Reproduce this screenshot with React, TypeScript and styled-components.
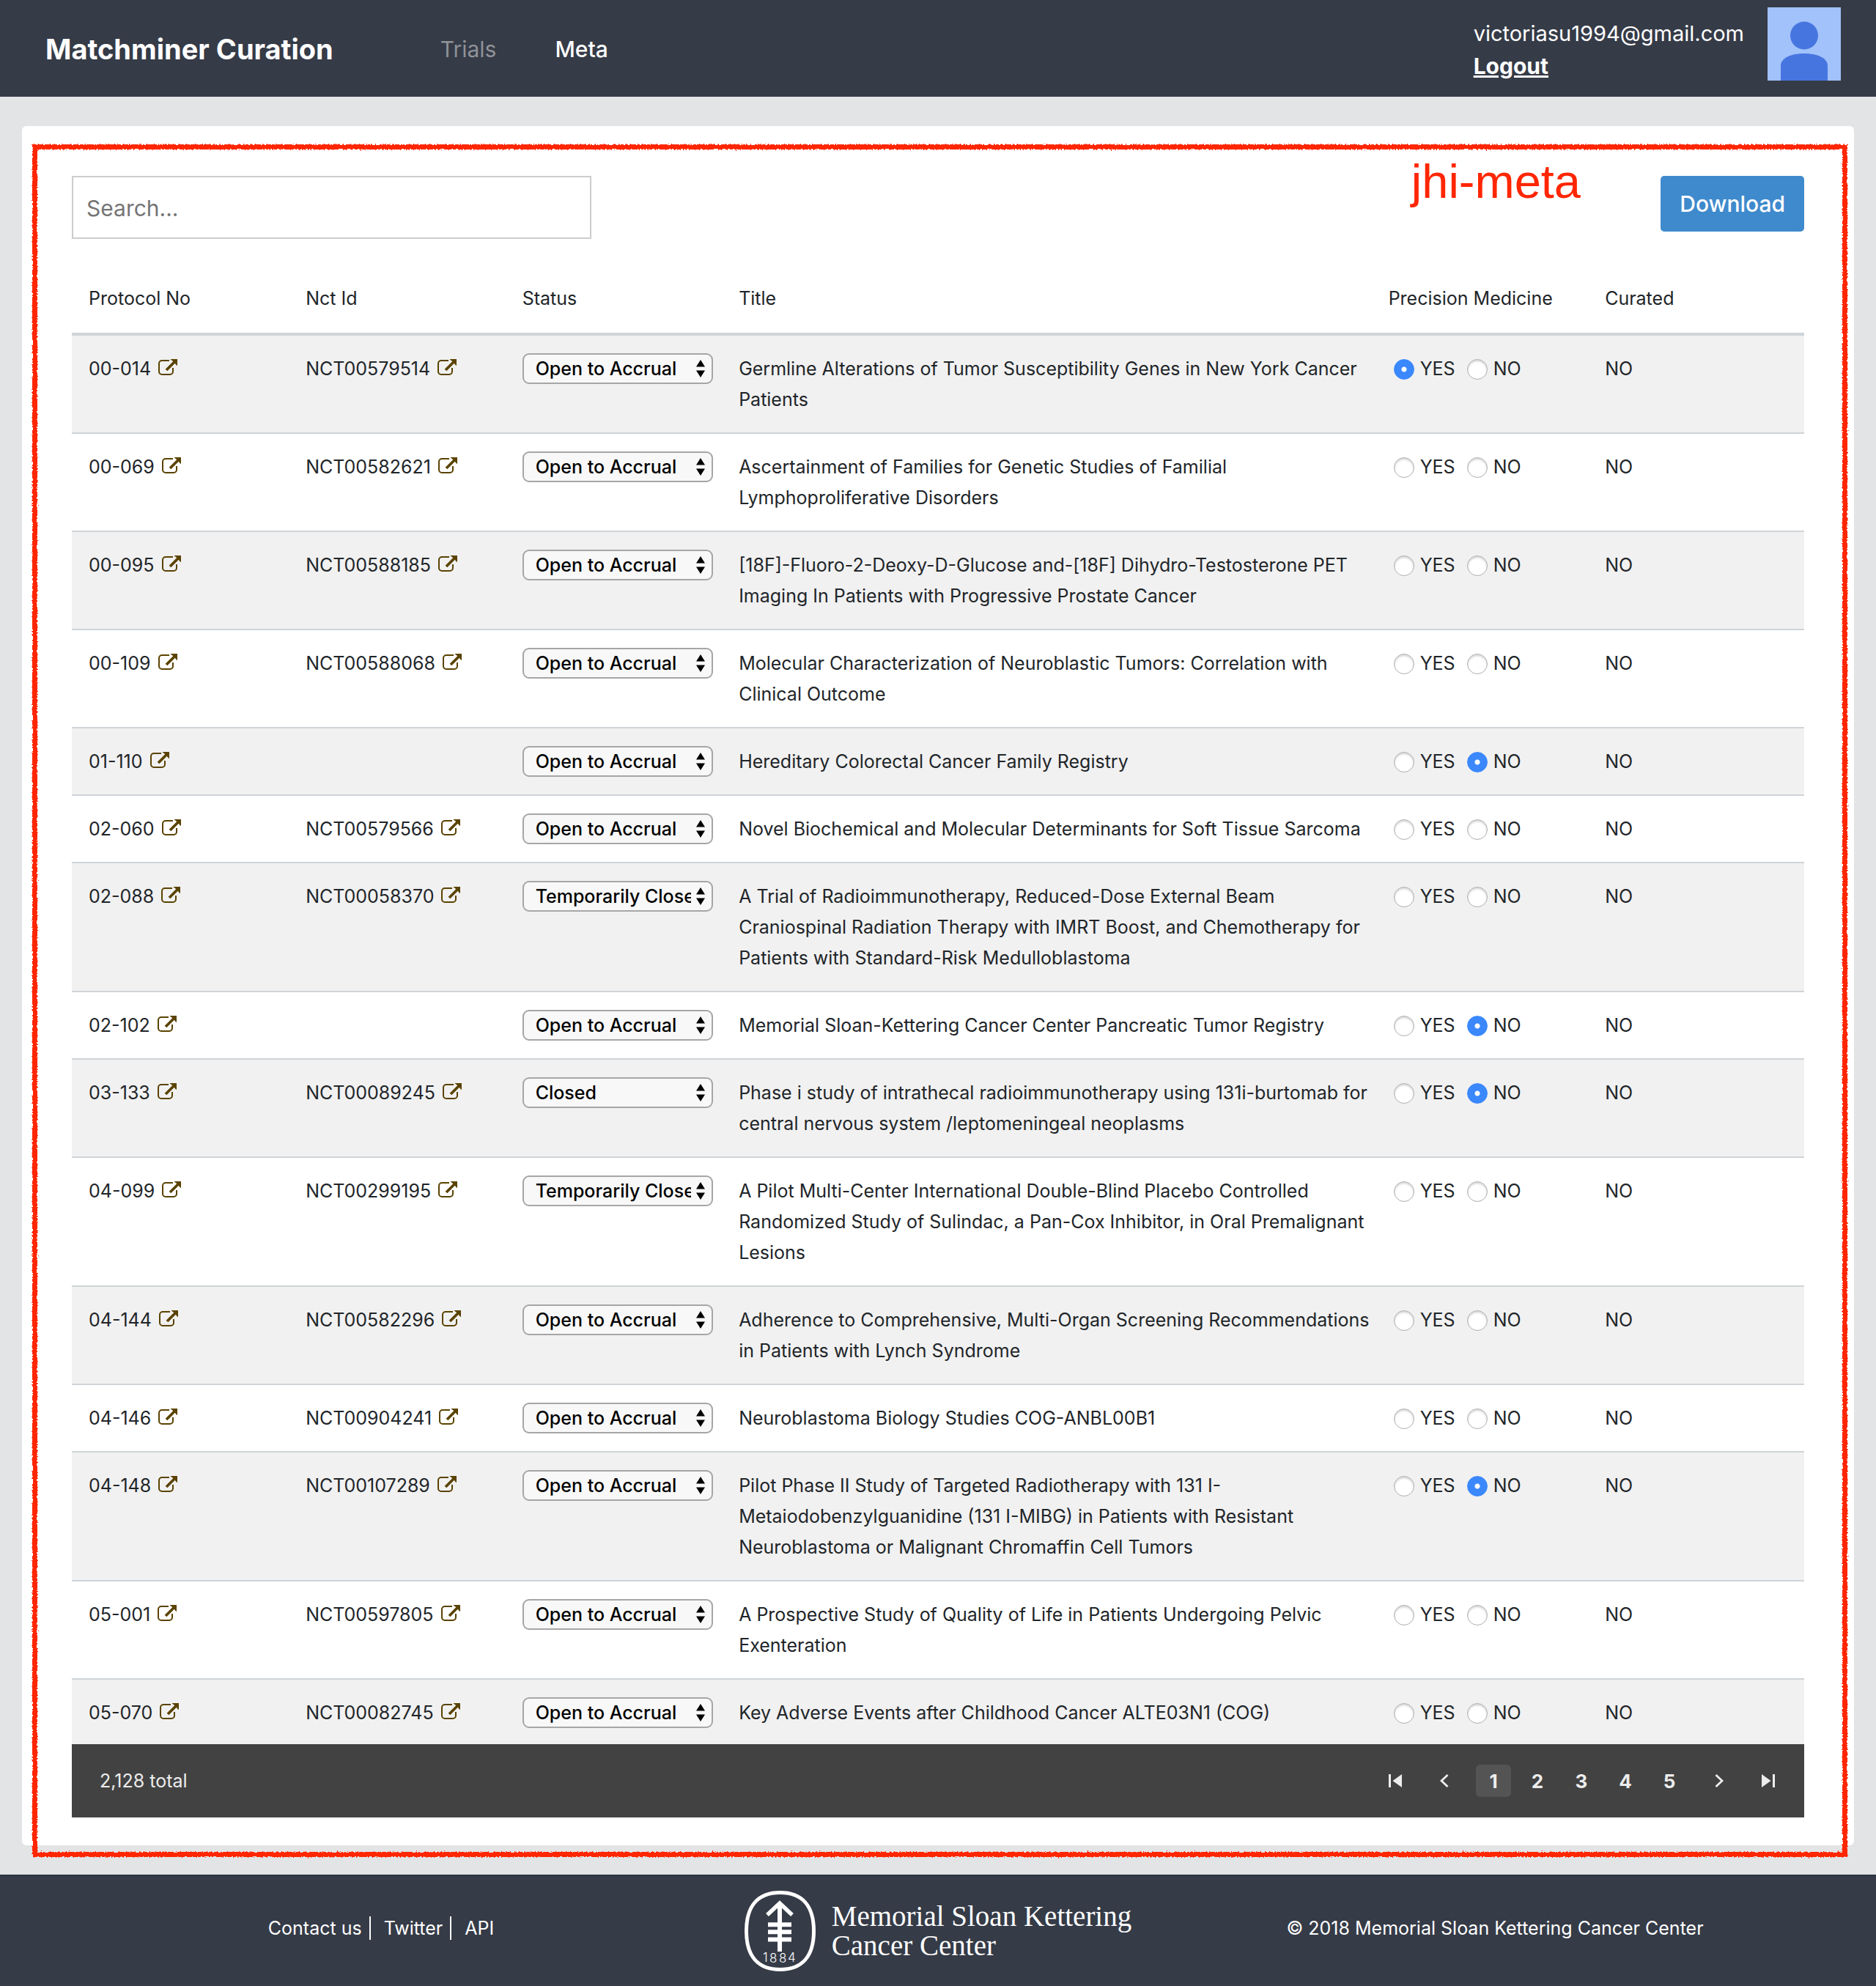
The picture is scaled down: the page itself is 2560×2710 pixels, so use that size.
import React from "react";
import styled, { createGlobalStyle } from "styled-components";

const colors = {
  slate: "#353b47",
  page: "#e3e4e6",
  text: "#212529",
  line: "#cfd4d8",
  stripe: "#f1f1f1",
  blue: "#3f8acd",
  mark: "#ff2600",
  icon: "#5a4300",
};

const GlobalStyle = createGlobalStyle`
  *, *::before, *::after { box-sizing: border-box; }
  body {
    margin: 0;
    background: ${colors.page};
    color: ${colors.text};
    font-family: Inter, "Liberation Sans", sans-serif;
    font-size: 25px;
    font-weight: 400;
    line-height: 42px;
  }
  button, input, select { font-family: inherit; margin: 0; }
`;

/* ---------- header ---------- */

const Header = styled.header`
  display: flex;
  align-items: center;
  min-height: 132px;
  padding: 2px 48px 0 62px;
  background: ${colors.slate};
  color: #fff;
`;

const Brand = styled.a`
  color: inherit;
  font-size: 38px;
  font-weight: 700;
  text-decoration: none;
`;

const Nav = styled.nav`
  display: flex;
  gap: 80px;
  margin-left: 146px;
`;

const NavLink = styled.a<{ $active?: boolean }>`
  color: ${(p) => (p.$active ? "#fff" : "#8f9297")};
  font-size: 30px;
  font-weight: ${(p) => (p.$active ? 500 : 400)};
  text-decoration: none;
`;

const User = styled.div`
  display: flex;
  align-items: center;
  gap: 32px;
  margin-left: auto;
  padding-top: 2px;
`;

const UserText = styled.div`
  display: flex;
  flex-direction: column;
  align-items: flex-start;
  font-size: 29px;
  line-height: 44px;
`;

const Logout = styled.a`
  color: inherit;
  font-size: 30px;
  font-weight: 700;
  text-decoration: underline;
`;

const Avatar = styled.svg`
  display: block;
  width: 100px;
  height: 100px;
  margin-bottom: 16px;
`;

/* ---------- card ---------- */

const Main = styled.main`
  padding: 40px 30px;
`;

const Card = styled.section`
  position: relative;
  padding: 68px 68px 38px;
  border-radius: 6px;
  background: #fff;
`;

const Outline = styled.div`
  position: absolute;
  inset: 25px 9px -16px 14px;
  border: 7px solid ${colors.mark};
  filter: url(#crayon);
  pointer-events: none;
`;

const MarkLabel = styled.div`
  position: absolute;
  top: 44px;
  right: 373px;
  color: ${colors.mark};
  font-family: "Liberation Sans", sans-serif;
  font-size: 65px;
  line-height: 64px;
`;

const Defs = styled.svg`
  position: absolute;
  width: 0;
  height: 0;
`;

const Toolbar = styled.div`
  display: flex;
  align-items: flex-start;
  justify-content: space-between;
  margin-bottom: 36px;
`;

const Search = styled.input`
  width: 30%;
  height: 86px;
  padding: 2px 18px 0;
  border: 2px solid #ccc;
  background: #fff;
  color: ${colors.text};
  font-size: 30px;
  &::placeholder { color: #757575; opacity: 1; }
`;

const Download = styled.button`
  height: 76px;
  padding: 0 26px;
  border: 0;
  border-radius: 5px;
  background: ${colors.blue};
  color: #fff;
  font-size: 30px;
  font-weight: 500;
`;

/* ---------- table ---------- */

const Table = styled.table`
  width: 100%;
  table-layout: fixed;
  border-collapse: separate;
  border-spacing: 0;
`;

const Col = styled.col<{ $share: string }>`
  width: ${(p) => p.$share};
`;

const HeadCell = styled.th`
  padding: 24px 0 26px;
  border-bottom: 4px solid ${colors.line};
  font-weight: 400;
  text-align: left;
  &:first-child { padding-left: 23px; }
`;

const Row = styled.tr`
  &:nth-child(odd) { background: ${colors.stripe}; }
`;

const Cell = styled.td`
  padding: 24px 0;
  border-bottom: 2px solid ${colors.line};
  vertical-align: top;
  &:first-child { padding-left: 23px; }
  ${Row}:last-child & {
    padding-bottom: 22px;
    border-bottom: 0;
  }
`;

const TitleCell = styled(Cell)`
  padding-right: 12px;
`;

const CellLine = styled.div`
  display: flex;
  align-items: center;
  height: 42px;
`;

const IconLink = styled.a`
  display: flex;
  margin: 0 0 4px 10px;
  color: ${colors.icon};
`;

const SelectBox = styled.div`
  display: grid;
  width: 260px;
  max-width: 100%;
  & > * { grid-area: 1 / 1; }
`;

const StatusSelect = styled.select`
  appearance: none;
  width: 100%;
  height: 42px;
  padding: 0 28px 0 16px;
  border: 2px solid #a6a6a6;
  border-radius: 9px;
  background: #f8f8f8;
  color: #000;
  font-size: 25px;
  font-weight: 500;
  text-overflow: clip;
`;

const SelectArrows = styled.svg`
  place-self: center end;
  width: 12px;
  height: 24px;
  margin-right: 11px;
  pointer-events: none;
`;

const RadioGroup = styled.div`
  display: flex;
  gap: 16px;
  height: 42px;
  padding-left: 7px;
`;

const RadioLabel = styled.label`
  display: flex;
  align-items: center;
  gap: 8px;
`;

const Radio = styled.input`
  appearance: none;
  width: 28px;
  height: 28px;
  margin-top: 2px;
  border: 1px solid #b0b0b0;
  border-radius: 50%;
  background: #fff;
  box-shadow: inset 0 2px 3px rgba(0, 0, 0, 0.18);
  &:checked {
    border-color: #3b88fd;
    background: radial-gradient(circle, #fff 3px, #3b88fd 4px);
    box-shadow: none;
  }
`;

const Pager = styled.div`
  display: flex;
  align-items: center;
  justify-content: space-between;
  height: 100px;
  padding: 0 22px 0 38px;
  background: #424242;
  color: #ededed;
`;

const PagerNav = styled.nav`
  display: flex;
  align-items: center;
  gap: 12px;
`;

const PageNumbers = styled.div`
  display: flex;
  gap: 12px;
  padding: 0 4px;
`;

const PagerButton = styled.button<{ $current?: boolean; $icon?: boolean }>`
  display: grid;
  place-items: center;
  width: ${(p) => (p.$icon ? 55 : 48)}px;
  height: 44px;
  padding: 0;
  border: 0;
  border-radius: 6px;
  background: ${(p) => (p.$current ? "#545454" : "transparent")};
  color: inherit;
  font-size: 26px;
  font-weight: 700;
`;

/* ---------- footer ---------- */

const Footer = styled.footer`
  min-height: 152px;
  padding: 20px 0;
  border-top: 2px solid #2d343e;
  background: ${colors.slate};
  color: #fff;
`;

const FooterGrid = styled.div`
  display: grid;
  grid-template-columns: repeat(3, 1fr);
  align-items: center;
  justify-items: center;
  max-width: 2280px;
  margin: 0 auto;
`;

const FooterText = styled.div`
  display: flex;
  padding-bottom: 8px;
`;

const FooterLink = styled.a`
  padding-right: 10px;
  color: inherit;
  line-height: 32px;
  text-decoration: none;
  & + & {
    padding-left: 18px;
    border-left: 2px solid #fff;
  }
  &:last-child { padding-right: 0; }
`;

const Logo = styled.div`
  display: flex;
  align-items: center;
  gap: 22px;
`;

const LogoText = styled.div`
  font-family: "Liberation Serif", serif;
  font-size: 39px;
  line-height: 40px;
`;

/* ---------- icons ---------- */

const ExternalIcon = () => (
  <svg width="26" height="23" viewBox="0 0 26 23" fill="none" stroke="currentColor" aria-hidden="true">
    <path d="M15 2H5a4 4 0 0 0-4 4v11a4 4 0 0 0 4 4h11a4 4 0 0 0 4-4v-5" strokeWidth="2" />
    <path d="M11 15 22 4" strokeWidth="3.800" />
    <path d="M16.500 0H26v9c-1.500-.7-2.200-1.600-3-3l-3.500-3.500c-1.200-.8-2.300-1.500-3-2.500Z" fill="currentColor" stroke="none" />
  </svg>
);

const FirstIcon = () => (
  <svg width="18" height="18" viewBox="0 0 18 18" fill="currentColor" aria-hidden="true">
    <path d="M0 0h3v18H0zM18 0v18L5.500 9z" />
  </svg>
);

const PrevIcon = () => (
  <svg width="12" height="18" viewBox="0 0 12 18" fill="none" stroke="currentColor" strokeWidth="2.800" aria-hidden="true">
    <path d="M10.500 1 2 9l8.500 8" />
  </svg>
);

const NextIcon = () => (
  <svg width="12" height="18" viewBox="0 0 12 18" fill="none" stroke="currentColor" strokeWidth="2.800" aria-hidden="true">
    <path d="M1.500 1 10 9l-8.500 8" />
  </svg>
);

const LastIcon = () => (
  <svg width="18" height="18" viewBox="0 0 18 18" fill="currentColor" aria-hidden="true">
    <path d="M15 0h3v18h-3zM0 0v18l12.500-9z" />
  </svg>
);

const LogoMark = () => (
  <svg width="97" height="110" viewBox="0 0 97 110" fill="none" stroke="#fff" aria-hidden="true">
    <path
      d="M48.500 2.500C78 2.500 94.500 20 94.500 55S78 107.500 48.500 107.500 2.500 90 2.500 55 19 2.500 48.500 2.500Z"
      strokeWidth="5"
    />
    <path d="M31 33 48 17l17 16" strokeWidth="5.600" />
    <path d="M48 17v66" strokeWidth="6" />
    <path d="M32 46.300h32M32 56.300h32M32 66.500h32" strokeWidth="6" />
    <text x="25 34 47 59" y="97 98 98 96.500" fill="#fff" stroke="none" fontFamily="Inter, sans-serif" fontSize="17" fontWeight="300">
      1884
    </text>
  </svg>
);

/* ---------- data ---------- */

type Trial = {
  no: string;
  nct?: string;
  status: string;
  title: string;
  precision?: "YES" | "NO";
};

const OPEN = "Open to Accrual";
const TEMP = "Temporarily Closed to Accrual";
const CLOSED = "Closed";
const STATUSES = [OPEN, TEMP, CLOSED];

const trials: Trial[] = [
  { no: "00-014", nct: "NCT00579514", status: OPEN, title: "Germline Alterations of Tumor Susceptibility Genes in New York Cancer Patients", precision: "YES" },
  { no: "00-069", nct: "NCT00582621", status: OPEN, title: "Ascertainment of Families for Genetic Studies of Familial Lymphoproliferative Disorders" },
  { no: "00-095", nct: "NCT00588185", status: OPEN, title: "[18F]-Fluoro-2-Deoxy-D-Glucose and-[18F] Dihydro-Testosterone PET Imaging In Patients with Progressive Prostate Cancer" },
  { no: "00-109", nct: "NCT00588068", status: OPEN, title: "Molecular Characterization of Neuroblastic Tumors: Correlation with Clinical Outcome" },
  { no: "01-110", status: OPEN, title: "Hereditary Colorectal Cancer Family Registry", precision: "NO" },
  { no: "02-060", nct: "NCT00579566", status: OPEN, title: "Novel Biochemical and Molecular Determinants for Soft Tissue Sarcoma" },
  { no: "02-088", nct: "NCT00058370", status: TEMP, title: "A Trial of Radioimmunotherapy, Reduced-Dose External Beam Craniospinal Radiation Therapy with IMRT Boost, and Chemotherapy for Patients with Standard-Risk Medulloblastoma" },
  { no: "02-102", status: OPEN, title: "Memorial Sloan-Kettering Cancer Center Pancreatic Tumor Registry", precision: "NO" },
  { no: "03-133", nct: "NCT00089245", status: CLOSED, title: "Phase i study of intrathecal radioimmunotherapy using 131i-burtomab for central nervous system /leptomeningeal neoplasms", precision: "NO" },
  { no: "04-099", nct: "NCT00299195", status: TEMP, title: "A Pilot Multi-Center International Double-Blind Placebo Controlled Randomized Study of Sulindac, a Pan-Cox Inhibitor, in Oral Premalignant Lesions" },
  { no: "04-144", nct: "NCT00582296", status: OPEN, title: "Adherence to Comprehensive, Multi-Organ Screening Recommendations in Patients with Lynch Syndrome" },
  { no: "04-146", nct: "NCT00904241", status: OPEN, title: "Neuroblastoma Biology Studies COG-ANBL00B1" },
  { no: "04-148", nct: "NCT00107289", status: OPEN, title: "Pilot Phase II Study of Targeted Radiotherapy with 131 I-Metaiodobenzylguanidine (131 I-MIBG) in Patients with Resistant Neuroblastoma or Malignant Chromaffin Cell Tumors", precision: "NO" },
  { no: "05-001", nct: "NCT00597805", status: OPEN, title: "A Prospective Study of Quality of Life in Patients Undergoing Pelvic Exenteration" },
  { no: "05-070", nct: "NCT00082745", status: OPEN, title: "Key Adverse Events after Childhood Cancer ALTE03N1 (COG)" },
];

const HEADINGS = ["Protocol No", "Nct Id", "Status", "Title", "Precision Medicine", "Curated"];
const SHARES = ["13.5%", "12.5%", "12.5%", "37.5%", "12.5%", "11.5%"];

const TrialRow = ({ trial }: { trial: Trial }) => (
  <Row>
    <Cell>
      <CellLine>
        {trial.no}
        <IconLink href="#" aria-label={`Open protocol ${trial.no}`}>
          <ExternalIcon />
        </IconLink>
      </CellLine>
    </Cell>
    <Cell>
      {trial.nct && (
        <CellLine>
          {trial.nct}
          <IconLink href="#" aria-label={`Open ${trial.nct}`}>
            <ExternalIcon />
          </IconLink>
        </CellLine>
      )}
    </Cell>
    <Cell>
      <SelectBox>
        <StatusSelect defaultValue={trial.status} aria-label={`Status of ${trial.no}`}>
          {STATUSES.map((s) => (
            <option key={s}>{s}</option>
          ))}
        </StatusSelect>
        <SelectArrows viewBox="0 0 12 24" aria-hidden="true">
          <path d="M6 0l6 9.500H0zM6 24l-6-9.500h12z" />
        </SelectArrows>
      </SelectBox>
    </Cell>
    <TitleCell>{trial.title}</TitleCell>
    <Cell>
      <RadioGroup role="radiogroup" aria-label={`Precision medicine, ${trial.no}`}>
        {["YES", "NO"].map((v) => (
          <RadioLabel key={v}>
            <Radio type="radio" name={`pm-${trial.no}`} value={v} defaultChecked={trial.precision === v} />
            {v}
          </RadioLabel>
        ))}
      </RadioGroup>
    </Cell>
    <Cell>NO</Cell>
  </Row>
);

export default function App() {
  return (
    <>
      <GlobalStyle />
      <Header>
        <Brand href="#">Matchminer Curation</Brand>
        <Nav>
          <NavLink href="#">Trials</NavLink>
          <NavLink href="#" $active>Meta</NavLink>
        </Nav>
        <User>
          <UserText>
            <span>victoriasu1994@gmail.com</span>
            <Logout href="#">Logout</Logout>
          </UserText>
          <Avatar viewBox="0 0 100 100" role="img" aria-label="User avatar">
            <rect width="100" height="100" fill="#a1c2fa" />
            <circle cx="50" cy="38.500" r="19" fill="#4775e0" />
            <path d="M18 100V80c0-11 14-17 32-17s32 6 32 17v20z" fill="#4775e0" />
          </Avatar>
        </User>
      </Header>

      <Main>
        <Card>
          <Toolbar>
            <Search type="search" placeholder="Search..." aria-label="Search trials" />
            <Download type="button">Download</Download>
          </Toolbar>
          <Table>
            <colgroup>
              {SHARES.map((s, i) => (
                <Col key={i} $share={s} />
              ))}
            </colgroup>
            <thead>
              <tr>
                {HEADINGS.map((h) => (
                  <HeadCell key={h} scope="col">{h}</HeadCell>
                ))}
              </tr>
            </thead>
            <tbody>
              {trials.map((t) => (
                <TrialRow key={t.no} trial={t} />
              ))}
            </tbody>
          </Table>
          <Pager>
            <span>2,128 total</span>
            <PagerNav aria-label="Pages">
              <PagerButton $icon type="button" aria-label="First page"><FirstIcon /></PagerButton>
              <PagerButton $icon type="button" aria-label="Previous page"><PrevIcon /></PagerButton>
              <PageNumbers>
                {[1, 2, 3, 4, 5].map((n) => (
                  <PagerButton key={n} type="button" $current={n === 1}>{n}</PagerButton>
                ))}
              </PageNumbers>
              <PagerButton $icon type="button" aria-label="Next page"><NextIcon /></PagerButton>
              <PagerButton $icon type="button" aria-label="Last page"><LastIcon /></PagerButton>
            </PagerNav>
          </Pager>
          <Outline />
          <MarkLabel>jhi-meta</MarkLabel>
          <Defs aria-hidden="true">
            <filter id="crayon" x="-1%" y="-1%" width="102%" height="102%">
              <feTurbulence type="fractalNoise" baseFrequency="0.5" numOctaves="2" seed="4" result="noise" />
              <feDisplacementMap in="SourceGraphic" in2="noise" scale="5" xChannelSelector="R" yChannelSelector="G" />
            </filter>
          </Defs>
        </Card>
      </Main>

      <Footer>
        <FooterGrid>
          <FooterText>
            <FooterLink href="#">Contact us</FooterLink>
            <FooterLink href="#">Twitter</FooterLink>
            <FooterLink href="#">API</FooterLink>
          </FooterText>
          <Logo>
            <LogoMark />
            <LogoText>
              Memorial Sloan Kettering
              <br />
              Cancer Center
            </LogoText>
          </Logo>
          <FooterText>© 2018 Memorial Sloan Kettering Cancer Center</FooterText>
        </FooterGrid>
      </Footer>
    </>
  );
}
